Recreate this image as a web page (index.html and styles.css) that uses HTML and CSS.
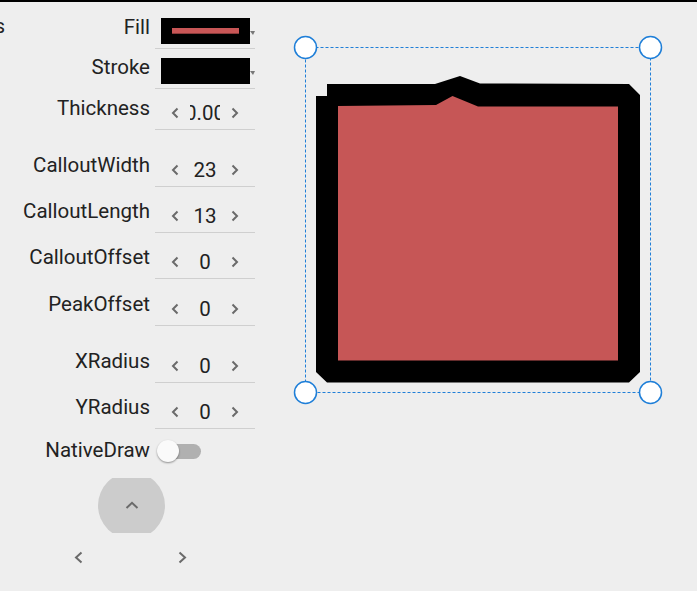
FILE: index.html
```html
<!DOCTYPE html>
<html>
<head>
  <meta name="viewport" content="width=device-width, initial-scale=1">
  <link rel="stylesheet" href="styles.css">
</head>
<body>

  <div class="page">
    <!-- Property editor on the left -->
    <div class="panel">
      <div class="row row-short">
        <span class="cut">Shapes</span>
        <div class="label">Fill</div>
        <div class="editor">
          <div class="swatch"><span class="swatch-line"></span></div>
          <span class="drop"></span>
        </div>
      </div>
      <div class="row row-short">
        <span class="cut"></span>
        <div class="label">Stroke</div>
        <div class="editor">
          <div class="swatch"></div>
          <span class="drop"></span>
        </div>
      </div>
      <div class="row row-thick">
        <span class="cut"></span>
        <div class="label">Thickness</div>
        <div class="editor stepper">
          <svg class="chev" viewBox="0 0 8 12"><polyline points="6.5,1.5 2,6 6.5,10.5"/></svg>
          <div class="val"><span class="clip">0.00</span></div>
          <svg class="chev" viewBox="0 0 8 12"><polyline points="1.5,1.5 6,6 1.5,10.5"/></svg>
        </div>
      </div>

      <div class="row group-start">
        <span class="cut"></span>
        <div class="label">CalloutWidth</div>
        <div class="editor stepper">
          <svg class="chev" viewBox="0 0 8 12"><polyline points="6.5,1.5 2,6 6.5,10.5"/></svg>
          <div class="val">23</div>
          <svg class="chev" viewBox="0 0 8 12"><polyline points="1.5,1.5 6,6 1.5,10.5"/></svg>
        </div>
      </div>
      <div class="row">
        <span class="cut"></span>
        <div class="label">CalloutLength</div>
        <div class="editor stepper">
          <svg class="chev" viewBox="0 0 8 12"><polyline points="6.5,1.5 2,6 6.5,10.5"/></svg>
          <div class="val">13</div>
          <svg class="chev" viewBox="0 0 8 12"><polyline points="1.5,1.5 6,6 1.5,10.5"/></svg>
        </div>
      </div>
      <div class="row">
        <span class="cut"></span>
        <div class="label">CalloutOffset</div>
        <div class="editor stepper">
          <svg class="chev" viewBox="0 0 8 12"><polyline points="6.5,1.5 2,6 6.5,10.5"/></svg>
          <div class="val">0</div>
          <svg class="chev" viewBox="0 0 8 12"><polyline points="1.5,1.5 6,6 1.5,10.5"/></svg>
        </div>
      </div>
      <div class="row row-tall">
        <span class="cut"></span>
        <div class="label">PeakOffset</div>
        <div class="editor stepper">
          <svg class="chev" viewBox="0 0 8 12"><polyline points="6.5,1.5 2,6 6.5,10.5"/></svg>
          <div class="val">0</div>
          <svg class="chev" viewBox="0 0 8 12"><polyline points="1.5,1.5 6,6 1.5,10.5"/></svg>
        </div>
      </div>

      <div class="row group-start">
        <span class="cut"></span>
        <div class="label">XRadius</div>
        <div class="editor stepper">
          <svg class="chev" viewBox="0 0 8 12"><polyline points="6.5,1.5 2,6 6.5,10.5"/></svg>
          <div class="val">0</div>
          <svg class="chev" viewBox="0 0 8 12"><polyline points="1.5,1.5 6,6 1.5,10.5"/></svg>
        </div>
      </div>
      <div class="row">
        <span class="cut"></span>
        <div class="label">YRadius</div>
        <div class="editor stepper">
          <svg class="chev" viewBox="0 0 8 12"><polyline points="6.5,1.5 2,6 6.5,10.5"/></svg>
          <div class="val">0</div>
          <svg class="chev" viewBox="0 0 8 12"><polyline points="1.5,1.5 6,6 1.5,10.5"/></svg>
        </div>
      </div>

      <div class="row row-switch">
        <span class="cut"></span>
        <div class="label">NativeDraw</div>
        <div class="switch">
          <span class="track"></span>
          <span class="knob"></span>
        </div>
      </div>

      <!-- Navigation pad -->
      <div class="pad-up">
        <div class="pad-circle">
          <svg class="chev-up" viewBox="0 0 14 8"><polyline points="1.5,7 7,1.8 12.5,7"/></svg>
        </div>
      </div>
      <div class="pad-row">
        <svg class="chev-nav" viewBox="0 0 9 13"><polyline points="7.5,1.5 2,6.5 7.5,11.5"/></svg>
        <svg class="chev-nav" viewBox="0 0 9 13"><polyline points="1.5,1.5 7,6.5 1.5,11.5"/></svg>
      </div>
    </div>

    <!-- Drawing surface -->
    <svg class="canvas" viewBox="260 2 437 589">
      <polygon class="shape-stroke" points="316,96 327,96 327,84 428,84 435,84 460,76 480,83.5 629,84 640,95 640,372 629,382.5 327,382.5 316,372"/>
      <polygon class="shape-fill" points="338,106 436,105 452.5,96 478,106.5 618,106.5 618,360.5 338,360.5"/>
      <rect class="selection" x="305.5" y="47.5" width="345" height="345"/>
      <circle class="handle" cx="305.5" cy="47.5" r="11"/>
      <circle class="handle" cx="650.5" cy="47.5" r="11"/>
      <circle class="handle" cx="305.5" cy="392.5" r="11"/>
      <circle class="handle" cx="650.5" cy="392.5" r="11"/>
    </svg>
  </div>

</body>
</html>
```

FILE: styles.css
```css
/* Base styling */
body {
  margin: 0;
  padding: 0;
  background: #eeeeee;
  border-top: 2px solid #000;
  font-family: Roboto, "Liberation Sans", sans-serif;
  color: #222;
  overflow: hidden;
}
.page {
  display: flex;
  height: 589px;
}
/* Left property panel */
.panel {
  width: 260px;
  flex: none;
  padding-top: 7px;
}
.row {
  display: flex;
  height: 46px;
}
.row-short {
  height: 40px;
}
.row-thick {
  height: 41px;
}
.row-tall {
  height: 47px;
}
.group-start {
  margin-top: 11px;
}
/* Part of a label that is scrolled off the left edge */
.cut {
  width: 5px;
  flex: none;
  overflow: hidden;
  display: flex;
  justify-content: flex-end;
  align-self: flex-end;
  font-size: 20.5px;
  line-height: 24px;
  margin-bottom: 11px;
  white-space: nowrap;
}
.label {
  width: 145px;
  flex: none;
  text-align: right;
  font-size: 20.5px;
  line-height: 24px;
  align-self: flex-end;
  margin-bottom: 10px;
  white-space: nowrap;
}
.editor {
  width: 100px;
  height: 34px;
  margin-left: 5px;
  align-self: flex-end;
  border-bottom: 1px solid #cfcfcf;
  display: flex;
  align-items: center;
  position: relative;
}
/* Colour pickers */
.swatch {
  width: 89px;
  height: 26px;
  margin-left: 6px;
  background: #000;
  display: flex;
  align-items: center;
  justify-content: center;
}
.swatch-line {
  width: 67px;
  height: 5px;
  background: #c85656;
  border-bottom: 1px solid #8a3a3a;
}
.drop {
  width: 0;
  height: 0;
  margin-top: 4px;
  border-left: 3px solid transparent;
  border-right: 2px solid transparent;
  border-top: 4px solid #777;
}
/* Numeric steppers */
.stepper {
  padding: 0 16px;
  box-sizing: border-box;
}
.chev {
  width: 8px;
  height: 12px;
  flex: none;
  margin-top: 1px;
}
.chev polyline,
.chev-up polyline,
.chev-nav polyline {
  fill: none;
  stroke: #6a6a6a;
  stroke-width: 2;
}
.val {
  flex: 1;
  display: flex;
  justify-content: center;
  font-size: 20.5px;
  line-height: 24px;
  margin-top: 1px;
}
.clip {
  width: 30px;
  overflow: hidden;
  display: flex;
  justify-content: center;
  white-space: nowrap;
}
/* Toggle switch */
.row-switch {
  height: 43px;
}
.row-switch .label {
  align-self: flex-start;
  margin-top: 9px;
  margin-bottom: 0;
}
.switch {
  position: relative;
  width: 44px;
  height: 22px;
  margin-left: 7px;
  margin-top: 11px;
}
.track {
  position: absolute;
  left: 11px;
  top: 4px;
  width: 33px;
  height: 15px;
  border-radius: 8px;
  background: #b0b0b0;
}
.knob {
  position: absolute;
  left: 0;
  top: 0;
  width: 22px;
  height: 22px;
  border-radius: 50%;
  background: #fafafa;
  box-shadow: 0 1px 2px rgba(0,0,0,0.4);
}
/* Navigation pad */
.pad-up {
  width: 67px;
  height: 55px;
  margin: 6px 0 0 98px;
  overflow: hidden;
}
.pad-circle {
  width: 67px;
  height: 67px;
  margin-top: -6px;
  border-radius: 50%;
  background: #cccccc;
  display: flex;
  align-items: center;
  justify-content: center;
}
.chev-up {
  width: 14px;
  height: 8px;
  margin-top: -2px;
}
.chev-nav {
  width: 9px;
  height: 13px;
}
.pad-row {
  display: flex;
  align-items: center;
  justify-content: space-between;
  width: 113px;
  height: 48px;
  margin-left: 74px;
}
/* Drawing canvas */
.canvas {
  width: 437px;
  height: 589px;
  flex: none;
}
.shape-stroke {
  fill: #000;
}
.shape-fill {
  fill: #c65656;
}
.selection {
  fill: none;
  stroke: #1f7fd8;
  stroke-width: 1;
  stroke-dasharray: 3 2;
}
.handle {
  fill: #fff;
  stroke: #1f7fd8;
  stroke-width: 1.5;
}
```
